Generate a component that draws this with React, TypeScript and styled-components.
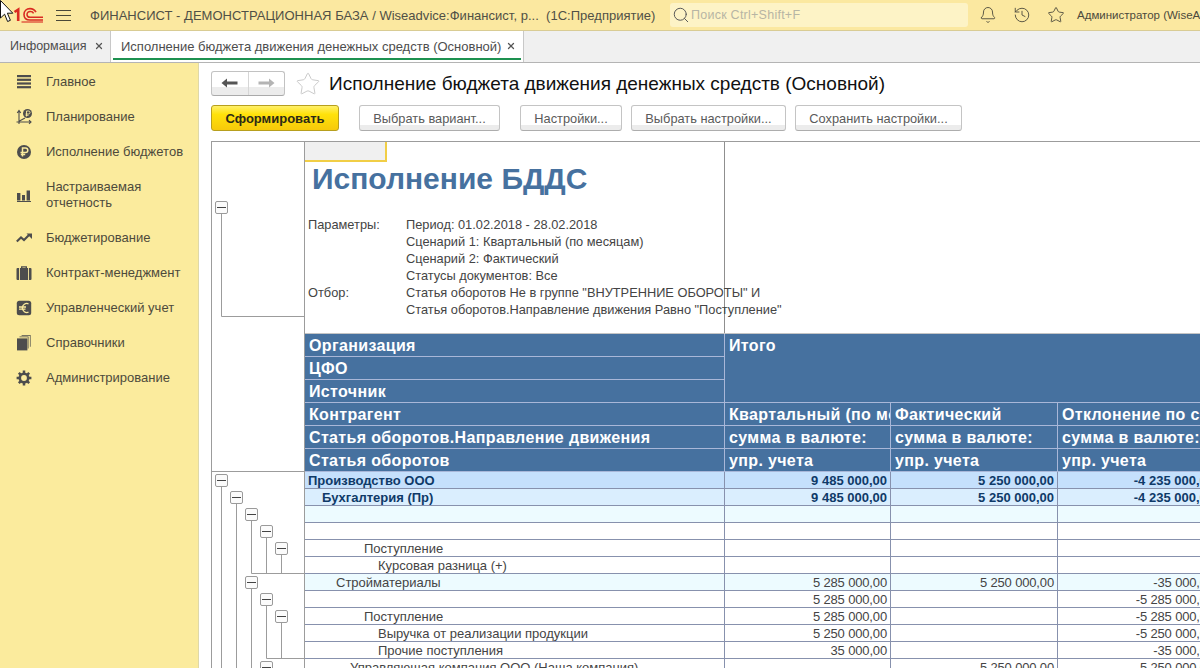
import React from "react";
import styled, { createGlobalStyle } from "styled-components";
import { Bell, History, Star, Search, X } from "lucide-react";

const Global = createGlobalStyle`
  html, body { margin: 0; padding: 0; height: 100%; background: #fff; overflow: hidden; }
  body { font-family: "Liberation Sans", Arial, sans-serif; color: #4a4a4a; }
  #root { height: 100%; }
`;

const Page = styled.div`
  position: relative;
  width: 1200px;
  height: 668px;
  display: flex;
  flex-direction: column;
  overflow: hidden;
`;

const Cursor = styled.svg`
  position: absolute;
  left: 0;
  top: 0;
`;

const TopBar = styled.header`
  height: 30px;
  flex: none;
  display: flex;
  align-items: center;
  background: #fbe8a0;
  border-bottom: 1px solid #d9cc94;
  overflow: hidden;
`;

const LogoSlot = styled.div`
  width: 56px;
  flex: none;
  display: flex;
  justify-content: flex-end;
  padding-right: 13px;
  box-sizing: border-box;
`;

const Burger = styled.svg`
  flex: none;
  margin-right: 19px;
`;

const AppTitle = styled.div`
  width: 580px;
  flex: none;
  font-size: 13px;
  letter-spacing: 0.02px;
  white-space: nowrap;
  color: #505046;
`;

const SearchBox = styled.div`
  width: 298px;
  height: 24px;
  flex: none;
  display: flex;
  align-items: center;
  gap: 1px;
  padding-left: 2px;
  box-sizing: border-box;
  background: #fdf3c6;
  border-radius: 3px;
  font-size: 12.5px;
  letter-spacing: 0.25px;
  color: #b7b5a4;
  margin-right: 11px;
`;

const TopIcons = styled.div`
  display: flex;
  align-items: center;
  gap: 16px;
  flex: none;
  color: #4c4a3c;
  margin-right: 12px;
`;

const UserName = styled.div`
  font-size: 11.5px;
  white-space: nowrap;
  color: #4c4a3c;
`;

const TabBar = styled.nav`
  height: 31px;
  flex: none;
  display: flex;
  background: #f0f0f0;
  border-bottom: 1px solid #b4b4b4;
  box-sizing: content-box;
`;

const Tab = styled.div<{ $active?: boolean; $w: number }>`
  width: ${(p) => p.$w}px;
  flex: none;
  box-sizing: border-box;
  display: flex;
  align-items: center;
  gap: ${(p) => (p.$active ? 5 : 7)}px;
  position: relative;
  padding: 0 0 1px 10px;
  font-size: ${(p) => (p.$active ? 13 : 12.5)}px;
  white-space: nowrap;
  color: #4d4d4d;
  background: ${(p) => (p.$active ? "#fff" : "transparent")};
  border-left: ${(p) => (p.$active ? "1px solid #c8c8c8" : "none")};
  border-right: ${(p) => (p.$active ? "1px solid #c8c8c8" : "none")};
  ${(p) =>
    p.$active
      ? `&::after { content: ""; position: absolute; left: 2px; right: 2px; bottom: 2px; height: 2px; background: #1d9150; }`
      : ""}
`;

const Body = styled.div`
  flex: 1;
  min-height: 0;
  display: flex;
`;

const Sidebar = styled.aside`
  width: 199px;
  flex: none;
  box-sizing: border-box;
  background: #fbeb9d;
  border-right: 1px solid #dfd8a8;
  padding-top: 1px;
`;

const NavItem = styled.div`
  display: flex;
  align-items: center;
  padding: 9.5px 8px 9.5px 0;
  font-size: 13px;
  line-height: 16px;
  color: #4d4a3c;
`;

const NavIcon = styled.svg`
  flex: none;
  margin: 0 14px 0 16px;
`;

const Main = styled.main`
  flex: 1;
  min-width: 0;
  display: flex;
  flex-direction: column;
  padding: 8px 0 0 12px;
`;

const TitleRow = styled.div`
  display: flex;
  align-items: center;
  height: 25px;
  flex: none;
  margin-bottom: 9px;
`;

const NavGroup = styled.div`
  width: 74px;
  height: 25px;
  flex: none;
  display: flex;
  box-sizing: border-box;
  border: 1px solid #c2c2c2;
  border-bottom-color: #aaa;
  border-radius: 3px;
  background: linear-gradient(#fff 0, #fff 65%, #ececec 65%, #ececec 100%);
`;

const NavArrow = styled.div<{ $sep?: boolean }>`
  flex: 1;
  display: flex;
  align-items: center;
  justify-content: center;
  border-left: ${(p) => (p.$sep ? "1px solid #d6d6d6" : "none")};
`;

const PageTitle = styled.h1`
  margin: 0 0 0 8px;
  font-size: 19px;
  font-weight: 400;
  color: #111;
  white-space: nowrap;
`;

const TitleStar = styled(Star)`
  margin-left: 10px;
  flex: none;
`;

const ButtonRow = styled.div`
  display: flex;
  height: 26px;
  flex: none;
  margin-bottom: 10px;
`;

const Btn = styled.div<{ $w: number; $gap: number }>`
  width: ${(p) => p.$w}px;
  margin-right: ${(p) => p.$gap}px;
  flex: none;
  box-sizing: border-box;
  display: flex;
  align-items: center;
  justify-content: center;
  padding-top: 1px;
  font-size: 12.8px;
  color: #5a5a5a;
  border: 1px solid #c4c4c4;
  border-bottom-color: #adadad;
  border-radius: 3px;
  background: linear-gradient(#fff 0, #fff 78%, #ececec 78%, #ececec 100%);
  white-space: nowrap;
`;

const PrimaryBtn = styled(Btn)`
  color: #2c2a16;
  font-weight: 700;
  font-size: 13px;
  border-color: #b79f1e;
  background: linear-gradient(#fff06a 0, #ffe20a 35%, #f7c90a 100%);
`;

const Sheet = styled.section`
  flex: 1;
  min-height: 0;
  display: flex;
  border-top: 1px solid #9c9c9c;
  border-left: 1px solid #9c9c9c;
  overflow: hidden;
`;

const Gutter = styled.div`
  width: 93px;
  flex: none;
  box-sizing: border-box;
  border-right: 1px solid #9c9c9c;
`;

const Report = styled.div`
  flex: 1;
  min-width: 0;
  overflow: hidden;
`;

const Heading = styled.div`
  height: 192px;
  box-sizing: border-box;
  border-bottom: 1px solid #c4c4c4;
`;

const HeadingCell = styled.div`
  width: 420px;
  height: 191px;
  box-sizing: border-box;
  border-right: 1px solid #8f8f8f;
`;

const ActiveCell = styled.div`
  width: 82px;
  height: 20px;
  box-sizing: border-box;
  background: #f0f0f0;
  border-right: 2px solid #f1ce46;
  border-bottom: 2px solid #f1ce46;
`;

const BigTitle = styled.div`
  margin: 0 0 0 7px;
  height: 34px;
  font-size: 30px;
  line-height: 34px;
  font-weight: 700;
  color: #46719f;
  white-space: nowrap;
`;

const Params = styled.div`
  margin-top: 20px;
  padding-left: 3px;
  display: grid;
  grid-template-columns: 98px 1fr;
  font-size: 12.8px;
  line-height: 17px;
  color: #444;
  white-space: nowrap;
`;

const Grid = styled.div`
  display: grid;
  width: 913px;
  grid-template-columns: 420px 166px 167px 160px;
  grid-auto-rows: auto;
`;

const Head = styled.div<{ $col?: string; $row?: string }>`
  height: ${(p) => (p.$row ? "auto" : "23px")};
  ${(p) => (p.$col ? `grid-column: ${p.$col};` : "")}
  ${(p) => (p.$row ? `grid-row: ${p.$row};` : "")}
  box-sizing: border-box;
  padding-left: 4px;
  background: #46719f;
  border-right: 1px solid #a9b7d8;
  border-bottom: 1px solid #a9b7d8;
  color: #fff;
  font-size: 16px;
  letter-spacing: 0.35px;
  line-height: 23px;
  font-weight: 700;
  white-space: nowrap;
  overflow: hidden;
`;

const Cell = styled.div<{ $level: 0 | 1 | 2 | 3; $num?: boolean; $pad?: number }>`
  height: 17px;
  box-sizing: border-box;
  background: ${(p) => ["#c5e0fc", "#daeefe", "#edfbff", "#fff"][p.$level]};
  color: ${(p) => (p.$level < 2 ? "#0f3a68" : "#444")};
  font-weight: ${(p) => (p.$level < 2 ? 700 : 400)};
  letter-spacing: ${(p) => (p.$num && p.$level >= 2 ? "-0.15px" : "0")};
  border-right: 1px solid #8791ad;
  border-bottom: 1px solid #8791ad;
  font-size: 13px;
  line-height: 17px;
  white-space: nowrap;
  overflow: hidden;
  text-align: ${(p) => (p.$num ? "right" : "left")};
  padding: ${(p) => (p.$num ? "0 3px 0 0" : `0 0 0 ${p.$pad ?? 4}px`)};
`;

type RowData = { label: string; pad: number; level: 0 | 1 | 2 | 3; v: [string, string, string] };

const rows: RowData[] = [
  { label: "Производство ООО", pad: 3, level: 0, v: ["9 485 000,00", "5 250 000,00", "-4 235 000,00"] },
  { label: "Бухгалтерия (Пр)", pad: 17, level: 1, v: ["9 485 000,00", "5 250 000,00", "-4 235 000,00"] },
  { label: "", pad: 4, level: 2, v: ["", "", ""] },
  { label: "", pad: 4, level: 3, v: ["", "", ""] },
  { label: "Поступление", pad: 59, level: 3, v: ["", "", ""] },
  { label: "Курсовая разница (+)", pad: 73, level: 3, v: ["", "", ""] },
  { label: "Стройматериалы", pad: 31, level: 2, v: ["5 285 000,00", "5 250 000,00", "-35 000,00"] },
  { label: "", pad: 4, level: 3, v: ["5 285 000,00", "", "-5 285 000,00"] },
  { label: "Поступление", pad: 59, level: 3, v: ["5 285 000,00", "", "-5 285 000,00"] },
  { label: "Выручка от реализации продукции", pad: 73, level: 3, v: ["5 250 000,00", "", "-5 250 000,00"] },
  { label: "Прочие поступления", pad: 73, level: 3, v: ["35 000,00", "", "-35 000,00"] },
  { label: "Управляющая компания ООО (Наша компания)", pad: 45, level: 3, v: ["", "5 250 000,00", "5 250 000,00"] },
];

const navItems: { label: React.ReactNode; icon: React.ReactNode }[] = [
  {
    label: "Главное",
    icon: (
      <g fill="#4d4d4d">
        <rect x="1" y="1" width="14" height="2.2" />
        <rect x="1" y="4.7" width="14" height="2.2" />
        <rect x="1" y="8.4" width="14" height="2.2" />
        <rect x="1" y="12.1" width="14" height="2.2" />
      </g>
    ),
  },
  {
    label: "Планирование",
    icon: (
      <g>
        <path d="M3 2v13M0.5 13h14.5M1.2 4L3 1.5 4.8 4M13 11.2l2 1.8-2 1.8M3.5 12L9 9" fill="none" stroke="#4d4d4d" strokeWidth="1.1" />
        <circle cx="11.5" cy="4.5" r="4.5" fill="#4d4d4d" />
        <path d="M10.5 7.5V2h2a1.4 1.4 0 010 3h-3M9.5 6.3h3" fill="none" stroke="#fbeb9d" strokeWidth="0.9" />
      </g>
    ),
  },
  {
    label: "Исполнение бюджетов",
    icon: (
      <g>
        <circle cx="8" cy="8" r="7" fill="#4d4d4d" />
        <path d="M6.5 12.5V4h3a2.2 2.2 0 010 4.6h-5M4.8 10.5h4.4" fill="none" stroke="#fbeb9d" strokeWidth="1.5" />
      </g>
    ),
  },
  {
    label: (
      <>
        Настраиваемая
        <br />
        отчетность
      </>
    ),
    icon: (
      <g fill="#4d4d4d">
        <rect x="1" y="6" width="3.4" height="7.5" />
        <rect x="6" y="8" width="3" height="5.5" />
        <rect x="10.6" y="3.5" width="3.4" height="10" />
        <rect x="1" y="14" width="14" height="1" />
      </g>
    ),
  },
  {
    label: "Бюджетирование",
    icon: (
      <g>
        <path d="M0.8 11.5L5 7.5l3 2.6 5-5" fill="none" stroke="#4d4d4d" strokeWidth="2.1" />
        <path d="M10.5 3.5H16V9z" fill="#4d4d4d" />
      </g>
    ),
  },
  {
    label: "Контракт-менеджмент",
    icon: (
      <g fill="#4d4d4d">
        <path d="M5 3V1.2h6V3h3.5a1 1 0 011 1v10a1 1 0 01-1 1H1.5a1 1 0 01-1-1V4a1 1 0 011-1zM6.4 3h3.2V2.4H6.4z" />
        <rect x="3" y="3" width="0.9" height="12" fill="#fbeb9d" />
        <rect x="12.1" y="3" width="0.9" height="12" fill="#fbeb9d" />
      </g>
    ),
  },
  {
    label: "Управленческий учет",
    icon: (
      <g>
        <rect x="0.8" y="0.8" width="14.4" height="14.4" rx="2.5" fill="#4d4d4d" />
        <path d="M12.5 3.8a4.5 4.5 0 100 8.4M3 7h7M3 9.2h6.5" fill="none" stroke="#fbeb9d" strokeWidth="1.3" />
      </g>
    ),
  },
  {
    label: "Справочники",
    icon: (
      <g fill="#4d4d4d">
        <rect x="1" y="3.4" width="10.4" height="12" />
        <path d="M3.5 1.6h9v11.8h-.7V2.3H3.5zM5.6 0h9v11.8h-.7V.7H5.6z" />
      </g>
    ),
  },
  {
    label: "Администрирование",
    icon: (
      <g>
        <circle cx="8" cy="8" r="4.2" fill="none" stroke="#4d4d4d" strokeWidth="2.6" />
        <path
          d="M8 0.6v3M8 12.4v3M0.6 8h3M12.4 8h3M2.8 2.8l2.1 2.1M11.1 11.1l2.1 2.1M13.2 2.8l-2.1 2.1M4.9 11.1l-2.1 2.1"
          stroke="#4d4d4d"
          strokeWidth="2.5"
        />
      </g>
    ),
  },
];

const treeLines =
  "M221.5 214V316.5H304" +
  " M221.5 486V668 M236.5 504V668 M251.5 521V573.5H304 M266.5 538V573.5 M281.5 555V573.5" +
  " M251.5 589V668 M266.5 606V658.5H304 M281.5 623V658.5";

const treeBoxes: [number, number][] = [
  [215, 201],
  [215, 474],
  [230, 491],
  [245, 508],
  [260, 525],
  [275, 542],
  [245, 576],
  [260, 593],
  [275, 610],
  [260, 661],
];

const Tree = () => (
  <svg width="92" height="526" viewBox="212 142 92 526" style={{ display: "block" }}>
    <path d="M212 471.5H304" stroke="#9c9c9c" fill="none" />
    <path d={treeLines} stroke="#9c9c9c" fill="none" />
    {treeBoxes.map(([x, y]) => (
      <g key={`${x}-${y}`}>
        <rect x={x + 0.5} y={y + 0.5} width="12" height="12" rx="1.5" fill="#fbfbfb" stroke="#9a9a9a" />
        <path d={`M${x + 2} ${y + 6.5}H${x + 11}`} stroke="#444" />
      </g>
    ))}
  </svg>
);

const Arrow = ({ color, flip }: { color: string; flip?: boolean }) => (
  <svg width="17" height="10" viewBox="0 0 17 10" style={{ transform: flip ? "scaleX(-1)" : undefined, marginBottom: 2 }}>
    <path d="M0.5 5L6 0.5V3.4H16.5V6.6H6V9.5z" fill={color} />
  </svg>
);

export default function App() {
  return (
    <Page>
      <Global />
      <TopBar>
        <LogoSlot>
          <svg width="30" height="16" viewBox="0 0 30 16">
            <path d="M1.5 5L5.2 2.6V14" fill="none" stroke="#d92b22" strokeWidth="2.6" />
            <path d="M23 5.2C21.6 2.8 19.6 1.6 17 1.6c-3.6 0-6 2.4-6 5.8s2.4 5.6 6 5.6h13" fill="none" stroke="#d92b22" strokeWidth="1.6" />
            <path d="M20.6 6.4C20 5 18.8 4.5 17.2 4.5c-1.8 0-3.2 1.2-3.2 2.9s1.4 2.9 3.2 2.9H30" fill="none" stroke="#d92b22" strokeWidth="1.5" />
            <path d="M8.5 15H30" fill="none" stroke="#d92b22" strokeWidth="1.1" />
          </svg>
        </LogoSlot>
        <Burger width="15" height="13" viewBox="0 0 15 13">
          <path d="M0 1.5H15M0 6.5H15M0 11.5H15" stroke="#4a4838" strokeWidth="1.1" />
        </Burger>
        <AppTitle>ФИНАНСИСТ - ДЕМОНСТРАЦИОННАЯ БАЗА / Wiseadvice:Финансист, р...&nbsp;&nbsp;(1С:Предприятие)</AppTitle>
        <SearchBox>
          <Search size={18} strokeWidth={1.3} color="#555" />
          Поиск Ctrl+Shift+F
        </SearchBox>
        <TopIcons>
          <Bell size={18} strokeWidth={1.2} />
          <History size={18} strokeWidth={1.2} />
          <Star size={18} strokeWidth={1.2} />
        </TopIcons>
        <UserName>Администратор (WiseAdvice)</UserName>
      </TopBar>

      <TabBar>
        <Tab $w={110}>
          Информация
          <X size={10} strokeWidth={3} color="#555" />
        </Tab>
        <Tab $active $w={414}>
          Исполнение бюджета движения денежных средств (Основной)
          <X size={10} strokeWidth={3} color="#555" />
        </Tab>
      </TabBar>

      <Body>
        <Sidebar>
          {navItems.map((n, i) => (
            <NavItem key={i}>
              <NavIcon width="16" height="16" viewBox="0 0 16 16">
                {n.icon}
              </NavIcon>
              <span>{n.label}</span>
            </NavItem>
          ))}
        </Sidebar>

        <Main>
          <TitleRow>
            <NavGroup>
              <NavArrow>
                <Arrow color="#555" />
              </NavArrow>
              <NavArrow $sep>
                <Arrow color="#b4b4b4" flip />
              </NavArrow>
            </NavGroup>
            <TitleStar size={26} strokeWidth={0.9} color="#c9c9c9" />
            <PageTitle>Исполнение бюджета движения денежных средств (Основной)</PageTitle>
          </TitleRow>

          <ButtonRow>
            <PrimaryBtn $w={128} $gap={20}>Сформировать</PrimaryBtn>
            <Btn $w={141} $gap={20}>Выбрать вариант...</Btn>
            <Btn $w={102} $gap={9}>Настройки...</Btn>
            <Btn $w={155} $gap={9}>Выбрать настройки...</Btn>
            <Btn $w={167} $gap={0}>Сохранить настройки...</Btn>
          </ButtonRow>

          <Sheet>
            <Gutter>
              <Tree />
            </Gutter>
            <Report>
              <Heading>
                <HeadingCell>
                  <ActiveCell />
                  <BigTitle>Исполнение БДДС</BigTitle>
                  <Params>
                    <span>Параметры:</span>
                    <span>Период: 01.02.2018 - 28.02.2018</span>
                    <span />
                    <span>Сценарий 1: Квартальный (по месяцам)</span>
                    <span />
                    <span>Сценарий 2: Фактический</span>
                    <span />
                    <span>Статусы документов: Все</span>
                    <span>Отбор:</span>
                    <span>Статья оборотов Не в группе "ВНУТРЕННИЕ ОБОРОТЫ" И</span>
                    <span />
                    <span>Статья оборотов.Направление движения Равно "Поступление"</span>
                  </Params>
                </HeadingCell>
              </Heading>
              <Grid>
                <Head>Организация</Head>
                <Head $col="2 / 5" $row="1 / 4">Итого</Head>
                <Head>ЦФО</Head>
                <Head>Источник</Head>
                <Head>Контрагент</Head>
                <Head>Квартальный (по месяцам)</Head>
                <Head>Фактический</Head>
                <Head>Отклонение по сценарию</Head>
                <Head>Статья оборотов.Направление движения</Head>
                <Head>сумма в валюте:</Head>
                <Head>сумма в валюте:</Head>
                <Head>сумма в валюте:</Head>
                <Head>Статья оборотов</Head>
                <Head>упр. учета</Head>
                <Head>упр. учета</Head>
                <Head>упр. учета</Head>
                {rows.map((r, i) => (
                  <React.Fragment key={i}>
                    <Cell $level={r.level} $pad={r.pad}>{r.label}</Cell>
                    {r.v.map((val, j) => (
                      <Cell key={j} $level={r.level} $num>{val}</Cell>
                    ))}
                  </React.Fragment>
                ))}
              </Grid>
            </Report>
          </Sheet>
        </Main>
      </Body>

      <Cursor width="14" height="24" viewBox="0 0 14 24">
        <path d="M0.5 0.5V18L4.6 14.2 7.6 21.5 10.4 20.3 7.4 13.2H12.8z" fill="#fff" stroke="#111" strokeWidth="1" />
      </Cursor>
    </Page>
  );
}
